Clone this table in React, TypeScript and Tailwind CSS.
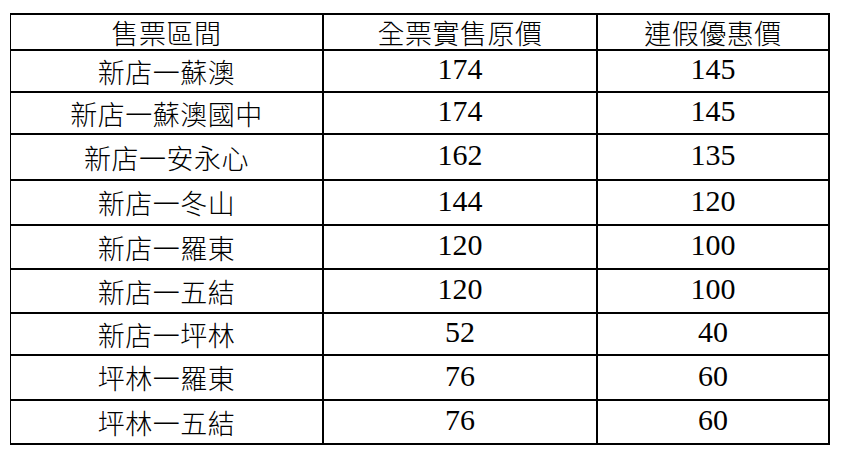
const header = ["售票區間", "全票實售原價", "連假優惠價"];

const rows: [string, string, string][] = [
  ["新店一蘇澳", "174", "145"],
  ["新店一蘇澳國中", "174", "145"],
  ["新店一安永心", "162", "135"],
  ["新店一冬山", "144", "120"],
  ["新店一羅東", "120", "100"],
  ["新店一五結", "120", "100"],
  ["新店一坪林", "52", "40"],
  ["坪林一羅東", "76", "60"],
  ["坪林一五結", "76", "60"],
];

function Zh({ children }: { children: React.ReactNode }) {
  return (
    <div className="flex items-center justify-center bg-white">
      <span className="font-['Noto_Sans_CJK_TC'] text-[27px] font-light leading-none tracking-[0.5px] text-black">
        {children}
      </span>
    </div>
  );
}

function Num({ children }: { children: React.ReactNode }) {
  return (
    <div className="flex items-center justify-center bg-white">
      <span className="-translate-y-[2px] font-['Times_New_Roman','Liberation_Serif',Times,'Tinos','Noto_Serif','DejaVu_Serif',serif] text-[30px] font-normal leading-none text-black">
        {children}
      </span>
    </div>
  );
}

export default function App() {
  return (
    <div className="h-[451px] w-[841px] bg-white pl-[10px] pt-[13px]">
      <div className="grid w-[820px] grid-cols-[311px_272px_230px] grid-rows-[34px_40px_40px_44px_43px_42px_42px_40px_43px_42px] gap-[2px] bg-black pb-[2px] pl-px pr-[2px] pt-[2px]">
        {header.map((h) => (
          <Zh key={h}>{h}</Zh>
        ))}
        {rows.map(([route, full, promo]) => (
          <div key={route} className="contents">
            <Zh>{route}</Zh>
            <Num>{full}</Num>
            <Num>{promo}</Num>
          </div>
        ))}
      </div>
    </div>
  );
}
